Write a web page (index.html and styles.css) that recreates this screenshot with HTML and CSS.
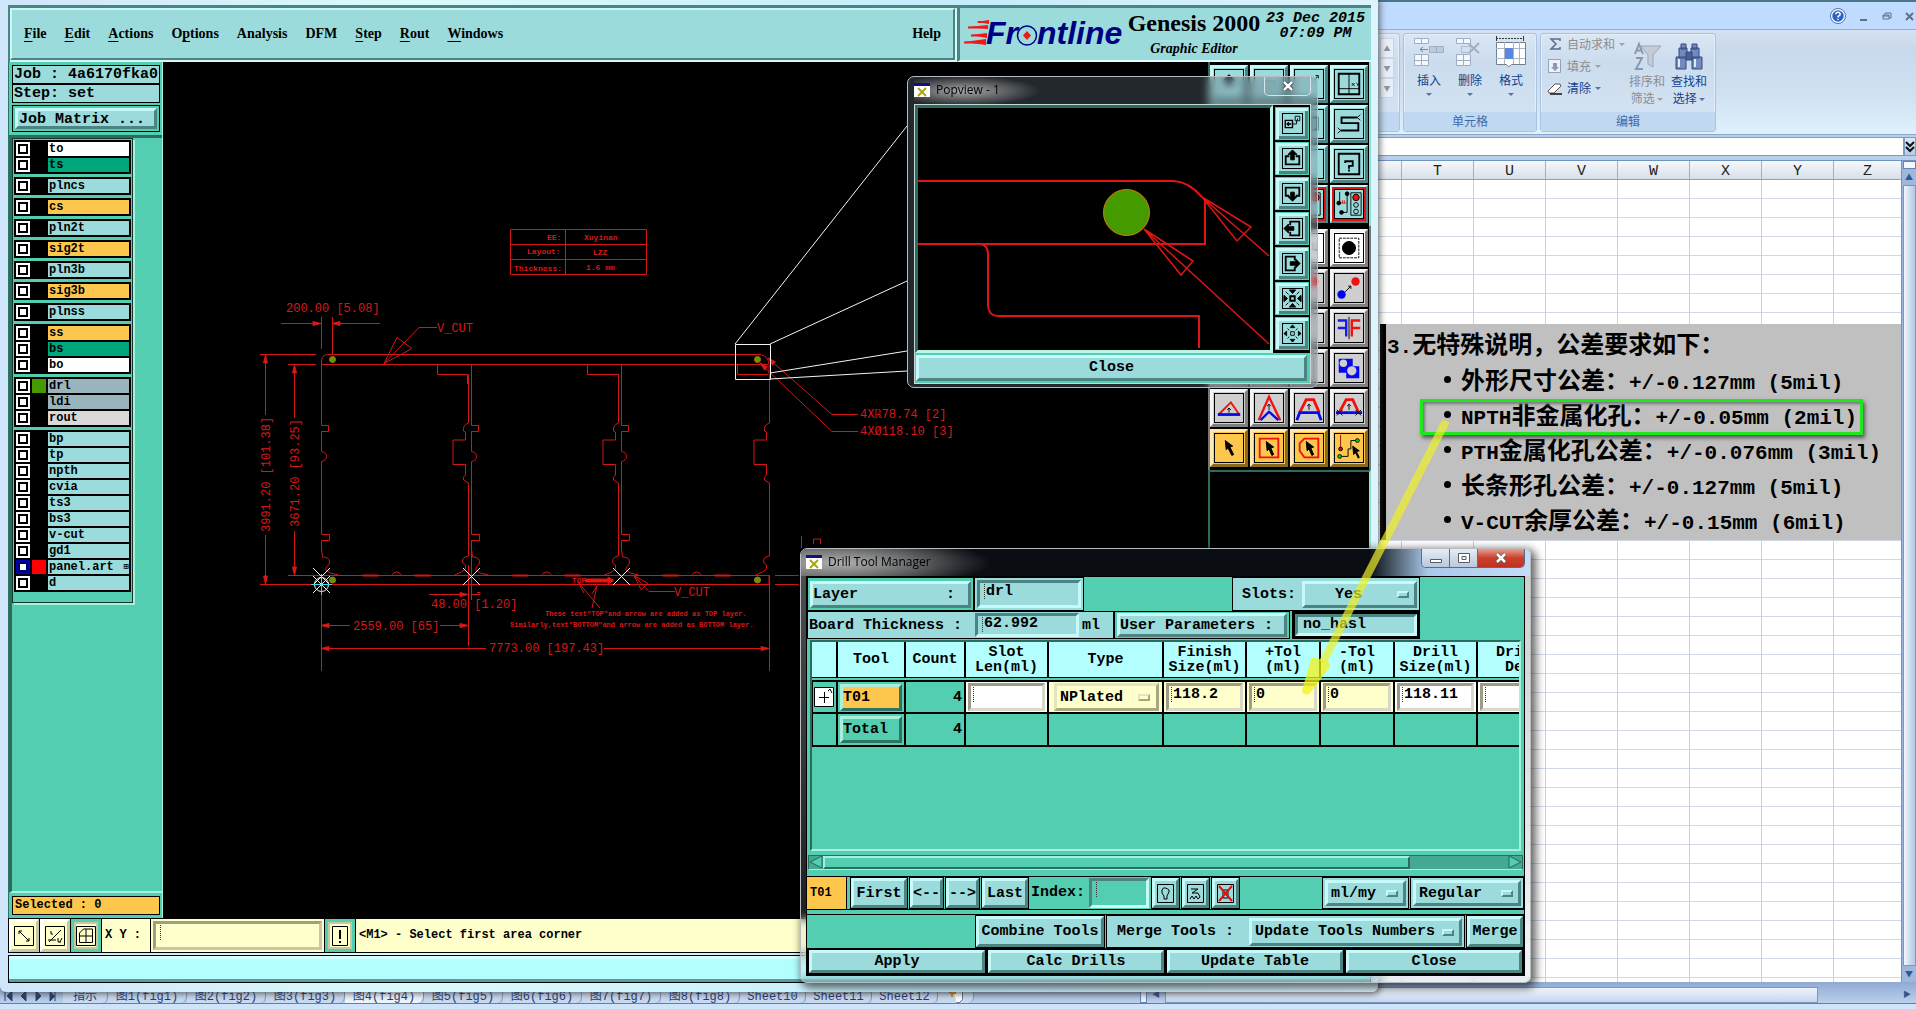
FILE: index.html
```html
<!DOCTYPE html>
<html lang="zh-CN">
<head>
<meta charset="utf-8">
<title>Genesis 2000</title>
<link rel="stylesheet" href="styles.css">
</head>
<body>

<!-- Spreadsheet behind the CAM windows -->
<section class="excel">
  <div class="xl-title">
    <svg width="16" height="16" viewBox="0 0 16 16"><circle cx="8" cy="8" r="6.500" fill="#2a62c8" stroke="#fff" stroke-width="1.500"/><circle cx="8" cy="8" r="7.500" fill="none" stroke="#4a74b8"/><path d="M5.800 6.300Q6 4.300 8 4.300T10.200 6.300Q10 7.500 8 8.400V9.500M8 10.700V12" fill="none" stroke="#fff" stroke-width="1.500"/></svg>
    <svg width="10" height="16" viewBox="0 0 10 16"><path d="M1 12h7" stroke="#5f6f84" stroke-width="2"/></svg>
    <svg width="10" height="16" viewBox="0 0 10 16"><path d="M3 6V5h6v5H7M1 7h6v4H1zM1 8h6" fill="none" stroke="#5f6f84"/></svg>
    <svg width="10" height="16" viewBox="0 0 10 16"><path d="M1 5l7 7M8 5l-7 7" stroke="#5f6f84" stroke-width="2"/></svg>
  </div>
  <div class="ribbon">
    <div class="rgroup styles-group">
      <div class="gallery"><span>▲</span><span>▼</span><span>▼</span></div>
      <div class="rlabel"></div>
    </div>
    <div class="rgroup cells-group">
      <div class="rbody">
        <button class="rbig"><svg width="32" height="32" viewBox="0 0 32 32"><g fill="#f4f7fb" stroke="#a0aec4"><path d="M1.500 2.500h14v5h-14zM8.500 2.500v5M1.500 18.500h14v11h-14zM8.500 18.500v11M1.500 24.500h14"/><path d="M16.500 10.500h14v6h-14zM23.500 10.500v6" fill="#bccbe0"/></g><path d="M7 13.500h8M10 11l-3 2.500 3 2.500" stroke="#7587a4" fill="none"/></svg>插入<i></i></button>
        <button class="rbig"><svg width="32" height="32" viewBox="0 0 32 32"><g fill="#f4f7fb" stroke="#a0aec4"><path d="M2.500 2.500h14v5h-14zM9.500 2.500v5M2.500 18.500h14v11h-14zM9.500 18.500v11M2.500 24.500h14"/></g><path d="M7.500 10.500h9v6h-9z" fill="none" stroke="#8b98ae" stroke-dasharray="1 1"/><path d="M15 8l10 9M25 7l-10 10" stroke="#a6aebb" stroke-width="2"/></svg>删除<i></i></button>
        <button class="rbig"><svg width="32" height="32" viewBox="0 0 32 32"><path d="M1 2.500h28M1.500 0v5M28.500 0v5" stroke="#333" stroke-dasharray="2 1"/><path d="M1.500 6.500h29v22h-14q-3 4-5 0h-10z" fill="#fff" stroke="#708090"/><path d="M9.500 6v22M18.500 6v22M24.500 6v22M1 12.500h29M1 22.500h29" stroke="#a8b6c8"/><path d="M10 12h8v11h-8z" fill="#5b88dd"/></svg>格式<i></i></button>
      </div>
      <div class="rlabel">单元格</div>
    </div>
    <div class="rgroup edit-group">
      <div class="rbody">
        <div class="rstack">
          <button class="rsmall off"><svg width="16" height="16" viewBox="0 0 16 16"><path d="M13 5V3H4l5 5-5 5h9v-2" fill="none" stroke="#5a6b8c" stroke-width="1.500"/></svg>自动求和<i></i></button>
          <button class="rsmall off"><svg width="16" height="16" viewBox="0 0 16 16"><path d="M1.500 1.500h12v13h-12z" fill="#eef2f8" stroke="#93a2bb"/><path d="M6 5h4v4h2l-4 4-4-4h2z" fill="#8b9ab2"/></svg>填充<i></i></button>
          <button class="rsmall"><svg width="16" height="16" viewBox="0 0 16 16"><path d="M1 11L8 4h5l1 2-7 7H2z" fill="#fff" stroke="#555"/><path d="M3 14h12" stroke="#111" stroke-width="1.500"/></svg>清除<i></i></button>
        </div>
        <button class="rbig two off"><svg width="32" height="32" viewBox="0 0 32 32"><path d="M4 14L8 4l4 10M5.500 10.500h5M5 18h6l-6 11h7" fill="none" stroke="#8a98b0" stroke-width="2"/><path d="M10 6h20L22 15v12l-5-3V15z" fill="#c5ccd8" stroke="#9ba6b8"/></svg>排序和<br>筛选 <i></i></button>
        <button class="rbig two"><svg width="32" height="32" viewBox="0 0 32 32"><g fill="#7489bd" stroke="#334a80"><path d="M8 4h5v5H8zM19 4h5v5h-5zM6 8h8v10H6zM18 8h8v10h-8zM3 17h10v12H3zM19 17h10v12H19z"/><path d="M13 12h6v8h-6z" fill="#4a5f98"/></g><path d="M6 19v8M22 19v8" stroke="#dfe8fa" stroke-width="2"/></svg>查找和<br>选择 <i></i></button>
      </div>
      <div class="rlabel">编辑</div>
    </div>
  </div>
  <div class="formula"><input class="fx" aria-label="编辑栏"><button class="expand" aria-label="展开"><svg width="11" height="14" viewBox="0 0 11 14"><path d="M1 2l4 4 4-4M1 7l4 4 4-4" fill="none" stroke="#111" stroke-width="2"/></svg></button></div>
  <div class="sheet">
    <div class="grid">
      <div class="cols"><span></span><span>T</span><span>U</span><span>V</span><span>W</span><span>X</span><span>Y</span><span class="last">Z</span></div>
      <div class="cells">
        <div class="note">
          <p class="head"><b>3.</b>无特殊说明，公差要求如下：</p>
          <ul>
            <li>外形尺寸公差：<b>+/-0.127mm (5mil)</b></li>
            <li><b>NPTH</b>非金属化孔：<b>+/-0.05mm (2mil)</b></li>
            <li><b>PTH</b>金属化孔公差：<b>+/-0.076mm (3mil)</b></li>
            <li>长条形孔公差：<b>+/-0.127mm (5mil)</b></li>
            <li><b>V-CUT</b>余厚公差：<b>+/-0.15mm (6mil)</b></li>
          </ul>
          <div class="mark"></div>
        </div>
      </div>
    </div>
    <div class="vscroll"><div class="split"></div><div class="arr">▲</div><div class="vthumb"></div><div class="arr">▼</div></div>
  </div>
  <div class="tabs">
    <svg class="nav" width="58" height="14" viewBox="0 0 58 14"><path d="M7 2v10M14 2v10l-5-5zM28 2v10l-5-5zM38 2v10l5-5zM52 2v10l5-5M57 2v10" fill="#28406e" stroke="#28406e" transform="translate(-2 0)"/></svg>
    <a href="#">指示</a><a href="#" class="w">图1(fig1)</a><a href="#" class="w">图2(fig2)</a><a href="#" class="w">图3(fig3)</a><a href="#" class="w on">图4(fig4)</a><a href="#" class="w">图5(fig5)</a><a href="#" class="w">图6(fig6)</a><a href="#" class="w">图7(fig7)</a><a href="#" class="w">图8(fig8)</a><a href="#" class="s">Sheet10</a><a href="#" class="s">Sheet11</a><a href="#" class="s">Sheet12</a><a href="#" class="new" aria-label="插入工作表"><svg width="16" height="14" viewBox="0 0 16 14"><path d="M5.500 2.500h9v8l-3 3h-3" fill="#fff" stroke="#5a70a0"/><path d="M4 1v7M1 4h7" stroke="#e09020" stroke-width="2"/></svg></a>
    <div class="hscroll"><div class="grip"></div><div class="arr">◀</div><div class="hthumb"></div><div class="rest"></div><div class="arr">▶</div></div>
  </div>
  <div class="xl-status"></div>
</section>

<!-- Genesis graphic editor -->
<section class="genesis">
  <header class="top">
    <nav class="menubar">
      <a href="#"><u>F</u>ile</a><a href="#"><u>E</u>dit</a><a href="#"><u>A</u>ctions</a><a href="#">O<u>p</u>tions</a><a href="#">Analysis</a><a href="#">DFM</a><a href="#"><u>S</u>tep</a><a href="#"><u>R</u>out</a><a href="#"><u>W</u>indows</a><a href="#" class="help">Help</a>
    </nav>
    <div class="brand">
      <svg width="164" height="40" viewBox="0 0 164 40"><g fill="#f01818"><path d="M12 8l13-2v4zM4 13l20-2v4zM7 21l16-2v5zM0 28l22-3v6z"/></g><path d="M14 8h10M4 13.500h20M7 21.500h16M0 28.500h22" stroke="#f01818" stroke-width="2"/><g font-family="Liberation Sans, sans-serif" font-weight="bold" font-style="italic" font-size="32" fill="#000084"><text x="22" y="30">Fr</text><text x="73" y="30">ntline</text></g><circle cx="63" cy="21.500" r="9.500" fill="none" stroke="#000084" stroke-width="1.500"/><path d="M63 17l4 4.500-4 4.500-4-4.500z" fill="#f01818"/></svg>
      <div class="product"><strong>Genesis 2000</strong><em>Graphic Editor</em></div>
      <div class="clock">23 Dec 2015<br>07:09 PM</div>
    </div>
  </header>

  <div class="work">
    <aside class="side">
      <div class="job">Job : 4a6170fka0</div>
      <div class="job">Step: set</div>
      <div class="jm"><button class="bev">Job Matrix ...</button></div>
      <div class="layers">
        <div class="layerbox">
          <div class="lg"><label><input type="checkbox"><i></i><span class="white">to</span></label><label><input type="checkbox"><i></i><span class="dark">ts</span></label></div>
          <div class="lg"><label><input type="checkbox"><i></i><span>plncs</span></label></div>
          <div class="lg"><label><input type="checkbox"><i></i><span class="orange">cs</span></label></div>
          <div class="lg"><label><input type="checkbox"><i></i><span>pln2t</span></label></div>
          <div class="lg"><label><input type="checkbox"><i></i><span class="orange">sig2t</span></label></div>
          <div class="lg"><label><input type="checkbox"><i></i><span>pln3b</span></label></div>
          <div class="lg"><label><input type="checkbox"><i></i><span class="orange">sig3b</span></label></div>
          <div class="lg"><label><input type="checkbox"><i></i><span>plnss</span></label></div>
          <div class="lg"><label><input type="checkbox"><i></i><span class="orange">ss</span></label><label><input type="checkbox"><i></i><span class="dark">bs</span></label><label><input type="checkbox"><i></i><span class="white">bo</span></label></div>
          <div class="lg"><label><input type="checkbox"><i class="green"></i><span class="slate">drl</span></label><label><input type="checkbox"><i></i><span class="slate">ldi</span></label><label><input type="checkbox"><i></i><span class="grey">rout</span></label></div>
          <div class="lg"><label><input type="checkbox"><i></i><span>bp</span></label><label><input type="checkbox"><i></i><span>tp</span></label><label><input type="checkbox"><i></i><span>npth</span></label><label><input type="checkbox"><i></i><span>cvia</span></label><label><input type="checkbox"><i></i><span>ts3</span></label><label><input type="checkbox"><i></i><span>bs3</span></label><label><input type="checkbox"><i></i><span>v-cut</span></label><label><input type="checkbox"><i></i><span>gd1</span></label><label><input type="checkbox" class="active"><i class="red"></i><span>panel.art<small>⊞</small></span></label><label><input type="checkbox"><i></i><span>d</span></label></div>
        </div>
      </div>
      <div class="selected">Selected : 0</div>
    </aside>

    <div class="canvas">
      <svg width="1045" height="856" viewBox="163 62 1045 856">
        <defs>
          <path id="pl" d="M0 364.500V425.500H7V431.500H0V451.500q5 1 5 5t-5 5V534.500H8V540.500H0V549L1 557q7 0 7 5 0 3-3 5l-1 3 5 3 8 2"/>
          <path id="pr" d="M0 374.500V423q-6 2-5 8l2 1v8H-15.500V464.500H-3V475q-3 2-2 5l5 3V556q-6 1-6 5 0 3 3 4v4l-4 3-7 3"/>
          <path id="pb" d="M41 575.500h16M93 575.500h16" stroke-width="2"/>
          <path id="bump" d="M70 575q5-6 10 0"/>
          <path id="ar" d="M0 0L8-2V2Z" fill="#e01818"/>
        </defs>
        <g fill="none" stroke="#d41616">
          <path d="M510.500 229.500h136v45h-136zM565.500 229.500v45M510.500 244.500h136M510.500 259.500h136"/>
          <path d="M321.500 364V360q1-5 6-5.500H760q8 1 9 10V374M321 364.500H768M288 575.500H769M260 584.500H769V575"/>
          <path d="M437.500 364.500v10h30V384M587.500 364.500v10h31V384M737.500 364.500v10h31"/>
          <use href="#pl" x="321.500"/><use href="#pl" x="471.500"/><use href="#pl" x="621.500"/>
          <use href="#pr" x="468.500"/><use href="#pr" x="618.500"/><use href="#pr" x="769.500"/>
          <use href="#pb" x="321.500"/><use href="#pb" x="471.500"/><use href="#pb" x="621.500"/>
          <use href="#bump" x="321.500"/><use href="#bump" x="471.500"/><use href="#bump" x="621.500"/>
          <path d="M281 323.500h40M332 323.500h48M321.500 317v32M332.500 317v38M260 354.500h56M288 364.500h28"/>
          <path d="M265.500 355v60M265.500 535v49M294.500 365v53M294.500 531v44"/>
          <path d="M321.500 584V671M468.500 565V646M471.500 540V600M769.500 575V671M321 625.500h29M440 625.500h28M321 648.500h165M604 648.500h165M429 594.500h38M472 594.500h8v-2h-3"/>
          <path d="M437 327.500H419L384 363.500M384 363.500L397 337.500 412 348.500Z"/>
          <path d="M675 591.500H649L634 575.500M634 575.500L641 589.500 648 583.500ZM600 608L578 582l6 11M592 608l5-22-5 8"/>
          <path d="M768 358L832 414.500H858M762 365L832 431.500H858M775 575.500h24M775 584.500h24M801.500 536v12M813.500 544v-5h7v5"/>
          <path d="M585 580.500h25" stroke="#f01010" stroke-width="4"/><path d="M608 577l6 3.500-6 3.500z" fill="#f01010"/>
          <use href="#ar" transform="translate(332 323.500)"/><use href="#ar" transform="translate(321 323.500) rotate(180)"/>
          <use href="#ar" transform="translate(321 625.500)"/><use href="#ar" transform="translate(468 625.500) rotate(180)"/>
          <use href="#ar" transform="translate(321 648.500)"/><use href="#ar" transform="translate(769 648.500) rotate(180)"/>
          <use href="#ar" transform="translate(468 594.500) rotate(180)"/>
          <use href="#ar" transform="translate(265.500 355) rotate(90)"/><use href="#ar" transform="translate(265.500 584) rotate(-90)"/>
          <use href="#ar" transform="translate(294.500 365) rotate(90)"/><use href="#ar" transform="translate(294.500 575) rotate(-90)"/>
          <use href="#ar" transform="translate(768 358) rotate(42)"/><use href="#ar" transform="translate(760 363) rotate(42)"/>
        </g>
        <g fill="#5a9a08" stroke="#b07010"><circle cx="332.500" cy="359.500" r="3"/><circle cx="757.500" cy="359.500" r="3"/><circle cx="332.500" cy="580" r="3"/><circle cx="757.500" cy="580" r="3"/></g>
        <g class="dim">
          <text x="286" y="312">200.00 [5.08]</text><text x="437" y="332">V_CUT</text><text x="674" y="596">V_CUT</text>
          <text x="431" y="608">48.00 [1.20]</text><text x="353" y="630">2559.00 [65]</text><text x="489" y="652">7773.00 [197.43]</text>
          <text x="860" y="418">4Xℝ78.74 [2]</text><text x="860" y="435">4XØ118.10 [3]</text>
          <text transform="translate(270 532) rotate(-90)">3991.20 [101.38]</text><text transform="translate(299 527) rotate(-90)">3671.20 [93.25]</text>
        </g>
        <g class="dim tiny">
          <text x="547" y="240">EE:</text><text x="527" y="254">Layout:</text><text x="514" y="271">Thickness:</text>
          <text x="584" y="240">Xuyinan</text><text x="593" y="255">LZZ</text><text x="586" y="270">1.6 mm</text><text x="572" y="583">TOP</text>
        </g>
        <g class="dim micro"><text x="545" y="616">These text"TOP"and arrow are added as TOP layer.</text><text x="510" y="627">Similarly,text"BOTTOM"and arrow are added as BOTTOM layer.</text></g>
        <g fill="none" stroke="#f4f4f4">
          <path d="M735.500 344.500h35v35h-35zM735 344L907 126M770 344L907 281M770 373L907 351M770 379L907 371"/>
          <path d="M313 568l17 17M330 568l-17 17M463 568l17 17M480 568l-17 17M613 568l17 17M630 568l-17 17M313 576l17 17M330 576l-17 17"/>
          <circle cx="321.500" cy="584.500" r="7"/>
          <path d="M311 584.500h21M321.500 574v21" stroke="#40e0e8"/>
        </g>
      </svg>
    </div>

    <div class="tools">
      <div class="tgroup cyan">
        <button aria-label="Up"><svg viewBox="0 0 30 30"><path d="M15 5l6 6h-3v5h-6v-5H9z" fill="#000"/></svg></button>
        <button aria-label="Home"><svg viewBox="0 0 30 30"><path d="M9 12h12v10H9z"/></svg></button>
        <button aria-label="Zoom"><svg viewBox="0 0 30 30"><path d="M16 9h2M21 11l3-4M22 6h3v3"/></svg></button>
        <button aria-label="Coordinates"><svg viewBox="0 0 30 30"><path d="M4 4h22v22H4z" stroke-width="2"/><path d="M15 4v22M4 20h22M18 14l3 3M21 14l-3 3M23 14l1.500 1.500L26 14M24.500 15.500V17"/></svg></button>
        <button aria-label="View 1"><svg viewBox="0 0 30 30"><path d="M8 8h12v12H8z"/></svg></button>
        <button aria-label="View 2"><svg viewBox="0 0 30 30"><path d="M8 8h12v12H8z"/></svg></button>
        <button aria-label="View 3"><svg viewBox="0 0 30 30"><path d="M12 8h12v13H12z" stroke-width="2"/></svg></button>
        <button aria-label="Profile"><svg viewBox="0 0 30 30"><path d="M24 8H7v6h18v8H6" stroke-width="2"/><path d="M24 8l3-3M24 8l3 3M6 22l-3-3M6 22l-3 3"/></svg></button>
        <button aria-label="Tool 1"><svg viewBox="0 0 30 30"></svg></button>
        <button aria-label="Tool 2"><svg viewBox="0 0 30 30"></svg></button>
        <button aria-label="Tool 3"><svg viewBox="0 0 30 30"></svg></button>
        <button aria-label="Query"><svg viewBox="0 0 30 30"><path d="M4 4h22v22H4zM11 14v-2h8v5h-4v3M15 21v2" stroke-width="2"/></svg></button>
        <button aria-label="Net 1"><svg viewBox="0 0 30 30"></svg></button>
        <button aria-label="Net 2"><svg viewBox="0 0 30 30"></svg></button>
        <button aria-label="Net 3" class="hot"><svg viewBox="0 0 30 30"><path d="M17 3h10v24H17z"/><circle cx="22" cy="8" r="4" fill="#f01010"/></svg></button>
        <button aria-label="Net 4" class="hot"><svg viewBox="0 0 30 30"><path d="M5 2v12M13 5v19H8M17 3h11v24H17z"/><path d="M6 14h6M8 11v3M10 11v3" stroke="#f01010"/><g fill="#000"><circle cx="13" cy="4" r="2"/><circle cx="4" cy="14" r="2"/><circle cx="7" cy="24" r="2"/></g><circle cx="22.500" cy="8" r="3.500" fill="#f01010"/><circle cx="22.500" cy="16" r="2.500"/><circle cx="22.500" cy="23" r="2.500"/></svg></button>
      </div>
      <div class="tgroup gray">
        <button class="pale" aria-label="Add 1"><svg viewBox="0 0 30 30"></svg></button>
        <button class="pale" aria-label="Add 2"><svg viewBox="0 0 30 30"></svg></button>
        <button class="pale" aria-label="Add 3"><svg viewBox="0 0 30 30"><path d="M19 9v8h5V9"/></svg></button>
        <button class="pale" aria-label="Select pad"><svg viewBox="0 0 30 30"><path d="M4.500 4.500h21v21h-21z" stroke-dasharray="3 1"/><circle cx="15" cy="15" r="7" fill="#000"/></svg></button>
        <button aria-label="Edit 1"><svg viewBox="0 0 30 30"></svg></button>
        <button aria-label="Edit 2"><svg viewBox="0 0 30 30"></svg></button>
        <button aria-label="Edit 3"><svg viewBox="0 0 30 30"><circle cx="20" cy="8" r="5" fill="#f01010" stroke="none"/></svg></button>
        <button aria-label="Move"><svg viewBox="0 0 30 30"><circle cx="22" cy="8" r="4.500" fill="#f01010" stroke="none"/><circle cx="7" cy="22" r="4.500" fill="#0000f0" stroke="none"/><path d="M11 19l6-6M14 13h3v3"/></svg></button>
        <button aria-label="Edit 4"><svg viewBox="0 0 30 30"></svg></button>
        <button aria-label="Edit 5"><svg viewBox="0 0 30 30"></svg></button>
        <button aria-label="Edit 6"><svg viewBox="0 0 30 30"></svg></button>
        <button aria-label="Mirror"><svg viewBox="0 0 30 30"><path d="M15 3v24"/><path d="M3 7h9v17M3 15h9" stroke="#1818f0" stroke-width="2.500"/><path d="M27 7h-9v17M27 15h-9" stroke="#f01010" stroke-width="2.500"/></svg></button>
        <button aria-label="Edit 7"><svg viewBox="0 0 30 30"></svg></button>
        <button aria-label="Edit 8"><svg viewBox="0 0 30 30"></svg></button>
        <button aria-label="Edit 9"><svg viewBox="0 0 30 30"><path d="M20 4v22"/></svg></button>
        <button aria-label="Surface"><svg viewBox="0 0 30 30"><path d="M4 5h15v8h7v13H12v-6H4z" fill="#0808f0" stroke="none"/><circle cx="9" cy="10" r="4" fill="#cfcfcf" stroke="none"/><circle cx="18" cy="18" r="5" fill="#cfcfcf" stroke="none"/></svg></button>
        <button aria-label="Triangle"><svg viewBox="0 0 30 30"><path d="M4 22L17 9l9 13" stroke="#f01010" stroke-width="2"/><path d="M3 22h24" stroke="#0808f0" stroke-width="3"/><path d="M15 20v-5M13 17l2-2 2 2"/></svg></button>
        <button aria-label="Peak"><svg viewBox="0 0 30 30"><path d="M4 28L15 3l12 25" stroke="#f01010" stroke-width="2.500"/><path d="M6 28l9-9 10 9" stroke="#0808f0" stroke-width="2.500"/><path d="M15 17v-6M13 13l2-2 2 2"/></svg></button>
        <button aria-label="Trapezoid"><svg viewBox="0 0 30 30"><path d="M5 20L12 6h8l6 14" stroke="#f01010" stroke-width="3"/><path d="M2 28l3-8h20l3 8" stroke="#0808f0" stroke-width="3"/><path d="M15 17v-6M13 13l2-2 2 2"/></svg></button>
        <button aria-label="Trapezoid line"><svg viewBox="0 0 30 30"><path d="M5 19L12 6h7l6 13" stroke="#f01010" stroke-width="3"/><path d="M1 20h28" stroke="#0808f0" stroke-width="3"/><path d="M15 17v-6M13 13l2-2 2 2M2 17l6 6M8 17l-6 6M22 17l6 6M28 17l-6 6"/></svg></button>
        <button class="gold" aria-label="Select"><svg viewBox="0 0 30 30"><path d="M11 7l1 10 2-2 4 8 2-1-4-8 3-1z" fill="#000"/></svg></button>
        <button class="gold" aria-label="Select frame"><svg viewBox="0 0 30 30"><path d="M5 5h20v20H5z" stroke="#f01010" stroke-width="2"/><path d="M12 8l1 10 2-2 3 7 2-1-3-7 3-1z" fill="#000"/></svg></button>
        <button class="gold" aria-label="Select polygon"><svg viewBox="0 0 30 30"><path d="M10 5h15v20H10l-5-7v-8z" stroke="#f01010" stroke-width="2"/><path d="M12 8l1 10 2-2 3 7 2-1-3-7 3-1z" fill="#000"/></svg></button>
        <button class="gold" aria-label="Select net"><svg viewBox="0 0 30 30"><path d="M6 1v14" stroke="#901010"/><path d="M6 24h8v-8h3V7h8"/><circle cx="6" cy="16" r="2" fill="#e01010"/><circle cx="5" cy="24" r="2" fill="#20d020"/><circle cx="24" cy="7" r="2" fill="#20d020"/><path d="M19 13l1 9 2-2 3 6 1-1-3-6 3-1z" fill="#000"/></svg></button>
      </div>
      <div class="tempty"></div>
    </div>
  </div>

  <div class="cmd">
    <button class="ic" aria-label="Snap"><svg width="20" height="20" viewBox="0 0 20 20"><path d="M.500.500h19v19H.500zM5 5l10 10M5 8V5h3M15 12v3h-3"/></svg></button>
    <button class="ic" aria-label="Grid off"><svg width="20" height="20" viewBox="0 0 20 20"><path d="M.500.500h19v19H.500zM4 16L16 4M3 14h8M6 5v3h2M13 12v4h3M17 12l-2 4"/></svg></button>
    <button class="ic g" aria-label="Grid"><svg width="20" height="20" viewBox="0 0 20 20"><path d="M.500.500h19v19H.500zM3.500 16.500V7l4-4h9v13.500zM10 3v13M3.500 10h13"/></svg></button>
    <label for="xy">X Y :</label>
    <div class="xyw"><input id="xy" class="field beam"></div>
    <button class="ic g" aria-label="Alert"><svg width="20" height="20" viewBox="0 0 20 20"><path d="M2.500.500h15v19h-15z"/><path d="M10 4v9M10 15v2" stroke-width="2"/></svg></button>
    <output>&lt;M1&gt; - Select first area corner</output>
  </div>
  <div class="statusline"></div>
</section>

<!-- Popview magnifier -->
<section class="win popview">
  <div class="wtitle"><svg width="16" height="14" viewBox="0 0 16 14"><path d="M0 0h16v14H0z" fill="#fff"/><path d="M0 0h16v3H0z" fill="#101080"/><path d="M4 5l8 8M12 5l-8 8" stroke="#a8a810" stroke-width="2"/></svg><span>Popview - 1</span>
    <button class="pclose" aria-label="Close window"><svg width="12" height="10" viewBox="0 0 12 10"><path d="M2 1l8 8M10 1L2 9" stroke="#333" stroke-width="4"/><path d="M2 1l8 8M10 1L2 9" stroke="#fff" stroke-width="2.500"/></svg></button></div>
  <div class="pbody">
    <div class="prow">
      <div class="pcanvas"><svg width="353" height="242" viewBox="918 108 353 242"><g fill="none" stroke="#e01414" stroke-width="2"><path d="M918 181H1174q15 1 28 16M1205 200V244H918M980 244q8 1 8 10V306q1 10 10 10H1199V348"/><path d="M1202 197L1251 227 1237 241ZM1202 197L1269 256M1144 229L1193 261 1181 275ZM1144 229L1269 344" stroke-width="1.500"/></g><circle cx="1126.500" cy="212.500" r="23" fill="#459a00" stroke="#d08010"/></svg></div>
      <div class="pbtns">
        <button aria-label="Dock"><svg viewBox="0 0 21 21"><path d="M2.500 7h8v8h-8zM5 11h4M6.500 9l-2 2 2 2" stroke-width="1.500"/><path d="M10 11h5V7M13.500 2.500h5v5h-5zM16 5v2"/></svg></button>
        <button aria-label="Pan up"><svg viewBox="0 0 21 21"><path d="M7 8H3v9h15V8h-4" stroke-width="2"/><path d="M10.500 1l5 5h-3v6h-4V6h-3z" fill="#000"/></svg></button>
        <button aria-label="Pan down"><svg viewBox="0 0 21 21"><path d="M7 13H3V4h15v9h-4" stroke-width="2"/><path d="M10.500 19l5-5h-3V9h-4v5h-3z" fill="#000"/></svg></button>
        <button aria-label="Pan left"><svg viewBox="0 0 21 21"><path d="M8 7V3h10v15H8v-4" stroke-width="2"/><path d="M1 10.500l5-5v3h6v4H6v3z" fill="#000"/></svg></button>
        <button aria-label="Pan right"><svg viewBox="0 0 21 21"><path d="M13 7V3H3v15h10v-4" stroke-width="2"/><path d="M19 10.500l-5-5v3H8v4h6v3z" fill="#000"/></svg></button>
        <button aria-label="Zoom in"><svg viewBox="0 0 21 21"><path d="M8 8h5v5H8z" stroke-width="2"/><path d="M10.500 5L7 1h7zM10.500 16L7 20h7zM5 10.500L1 7v7zM16 10.500L20 7v7z" fill="#000"/><path d="M3 3l3 3M18 3l-3 3M3 18l3-3M18 18l-3-3"/></svg></button>
        <button aria-label="Zoom out"><svg viewBox="0 0 21 21"><path d="M8.500 8.500h4v4h-4z"/><path d="M10.500 1L13 4H8zM10.500 20L13 17H8zM1 10.500L4 8v5zM20 10.500L17 8v5z" fill="#000"/><path d="M5 5l2 2M16 5l-2 2M5 16l2-2M16 16l-2-2"/></svg></button>
      </div>
    </div>
    <button class="bev pok">Close</button>
  </div>
</section>

<!-- Drill Tool Manager dialog -->
<section class="win drill">
  <div class="wtitle"><svg width="16" height="14" viewBox="0 0 16 14"><path d="M0 0h16v14H0z" fill="#fff"/><path d="M0 0h16v3H0z" fill="#101080"/><path d="M4 5l8 8M12 5l-8 8" stroke="#a8a810" stroke-width="2"/></svg><span>Drill Tool Manager</span>
    <div class="wctl"><button aria-label="Minimize"><svg width="14" height="12" viewBox="0 0 14 12"><path d="M1.500 7.500h11v3h-11z" fill="#fff" stroke="#555b66"/></svg></button><button aria-label="Maximize"><svg width="14" height="12" viewBox="0 0 14 12"><path d="M1.500 1.500h11v9h-11zM5 4.500h4v3H5z" fill="#fff" stroke="#555b66"/></svg></button><button class="x" aria-label="Close window"><svg width="14" height="12" viewBox="0 0 14 12"><path d="M3 2l8 8M11 2l-8 8" stroke="#555" stroke-width="4"/><path d="M3 2l8 8M11 2l-8 8" stroke="#fff" stroke-width="2.500"/></svg></button></div></div>
  <div class="dbody">
    <div class="drow r1">
      <div class="cell g c-layer"><button class="bev lb"><span>Layer</span><span>:</span></button></div>
      <div class="cell c-drl"><input class="field beam" value="drl" aria-label="Layer"></div>
      <div class="fill"></div>
      <div class="cell c-slots"><label for="slots">Slots:</label><span class="opt"><select id="slots" class="bev mid"><option>Yes</option></select></span></div>
      <div class="rightpad"></div>
    </div>
    <div class="drow r2">
      <div class="cell c-bt"><label for="bt">Board Thickness :</label><input id="bt" class="field beam" value="62.992"><span>ml</span></div>
      <div class="cell g c-up"><button class="bev">User Parameters :</button></div>
      <div class="fill"></div>
      <div class="c-hasl"><input class="field" value="no_hasl" aria-label="User parameters"></div>
      <div class="rightpad"></div>
    </div>
    <div class="pane">
      <table>
        <colgroup><col class="k0"><col class="k1"><col class="k2"><col class="k3"><col class="k4"><col class="k3"><col class="k5"><col class="k5"><col class="k3"><col class="k3"></colgroup>
        <thead><tr><th></th><th>Tool</th><th>Count</th><th>Slot<br>Len(ml)</th><th>Type</th><th>Finish<br>Size(ml)</th><th>+Tol<br>(ml)</th><th>-Tol<br>(ml)</th><th>Drill<br>Size(ml)</th><th>Drill<br>Des</th></tr></thead>
        <tbody>
          <tr><td><button class="plus" aria-label="Expand"><svg width="20" height="20" viewBox="0 0 20 20"><path d="M.500.500h19v19H.500z" fill="#fff"/><path d="M5 10.500h10M10.500 5v11M14 4l2-2 2 4"/></svg></button></td><td><button class="bev tool gold">T01</button></td><td class="num">4</td><td class="w"><input class="field beam" aria-label="Slot length"></td><td class="c"><span class="opt"><select class="bev cream" aria-label="Type"><option>NPlated</option></select></span></td><td class="c"><input class="field beam" value="118.2" aria-label="Finish size"></td><td class="c"><input class="field beam" value="0" aria-label="Plus tolerance"></td><td class="c"><input class="field beam" value="0" aria-label="Minus tolerance"></td><td class="w"><input class="field beam" value="118.11" aria-label="Drill size"></td><td class="w"><input class="field beam" aria-label="Drill designator"></td></tr>
          <tr><td></td><td><button class="bev tool green">Total</button></td><td class="num">4</td><td></td><td></td><td></td><td></td><td></td><td></td><td></td></tr>
        </tbody>
      </table>
    </div>
    <div class="dscroll"><svg width="14" height="12" viewBox="0 0 14 12"><path d="M13 0v12L1 6z" fill="#54ceb0" stroke="#206858"/></svg><div class="dtrack"><div class="dthumb"></div></div><svg width="14" height="12" viewBox="0 0 14 12"><path d="M1 0v12l12-6z" fill="#54ceb0" stroke="#206858"/></svg></div>
    <div class="drow ra">
      <div class="t01">T01</div>
      <button class="bev first">First</button><button class="bev step">&lt;--</button><button class="bev step">--&gt;</button><button class="bev last">Last</button>
      <label for="idx">Index:</label><input id="idx" class="field beam idx">
      <button class="bev ico" aria-label="Highlight"><svg width="17" height="19" viewBox="0 0 17 19"><path d="M.500.500h16v18H.500zM7 12Q4 9 5 6t3.500-2T12 6t-2 6v3H7z"/></svg></button><button class="bev ico" aria-label="Select tool"><svg width="17" height="19" viewBox="0 0 17 19"><path d="M.500.500h16v18H.500zM4 5h7l-6 4h6l2 4M3 15l2-3 2 3 2-3 2 3 2-2"/></svg></button><button class="bev ico" aria-label="Delete"><svg width="17" height="19" viewBox="0 0 17 19"><path d="M.500.500h16v18H.500zM6 14V6h5v8z"/><path d="M2 2l13 15M15 2L2 17" stroke="#e01010" stroke-width="2"/></svg></button>
      <div class="fill"></div>
      <div class="cell c-unit"><span class="opt"><select class="bev" aria-label="Units"><option>ml/my</option></select></span></div>
      <div class="cell c-reg"><span class="opt"><select class="bev" aria-label="Mode"><option>Regular</option></select></span></div>
    </div>
    <div class="drow rb">
      <div class="fill"></div>
      <button class="bev combine">Combine Tools</button>
      <div class="cell c-merge"><label for="mt">Merge Tools :</label><span class="opt"><select id="mt" class="bev"><option>Update Tools Numbers</option></select></span></div>
      <button class="bev merge">Merge</button>
    </div>
    <div class="drow rc"><button class="bev">Apply</button><button class="bev">Calc Drills</button><button class="bev">Update Table</button><button class="bev">Close</button></div>
  </div>
</section>

<svg class="callout" width="160" height="290" viewBox="0 0 160 290"><path d="M149 8L26 249" stroke="#eef028" stroke-width="8" stroke-opacity=".7"/><path d="M13 250q0-6 6-5l12 4q4 2 1 6l-18 24q-4 5-8 1l-1-3z" fill="#f2f218" fill-opacity=".75"/></svg>
</body>
</html>
```
FILE: styles.css
```css
:root {
  --green: #54ceb0;
  --cyan: #9bdbdb;
  --pale: #b3ffff;
  --gold: #fdc74e;
  --cream: #ffffcc;
  --hi: #c6fafa;
  --lo: #4c8484;
  --mono: "Liberation Mono", monospace;
  --cjk: "Noto Sans CJK SC", sans-serif;
}
*, *::before, *::after { box-sizing: border-box; }
body { margin: 0; position: relative; height: 100vh; overflow: hidden; background: #d8f0f8; color: #000; font-family: var(--mono); }
button, input, select { margin: 0; padding: 0; border: 0; border-radius: 0; font: inherit; color: inherit; background: none; appearance: none; min-width: 0; }
a { color: inherit; text-decoration: none; }
svg { display: block; flex: none; }
p, ul { margin: 0; padding: 0; list-style: none; }

/* raised push buttons, sunken fields */
.bev { background: var(--cyan); border: 3px solid; border-color: var(--hi) var(--lo) var(--lo) var(--hi); white-space: nowrap; }
.field { border: 3px solid; border-color: var(--lo) var(--hi) var(--hi) var(--lo); width: 100%; padding: 0 5px 5px 6px; }
.beam { background: repeating-linear-gradient(#333 0 1px, transparent 1px 2px) 4px 1px / 1px 15px no-repeat; }
.opt { position: relative; display: flex; }
.opt select { width: 100%; padding-left: 8px; }
.opt::after { content: ""; position: absolute; right: 10px; top: 50%; width: 12px; height: 7px; margin-top: -3px; border: 2px solid; border-color: var(--hi) var(--lo) var(--lo) var(--hi); }

/* spreadsheet */
.excel { position: absolute; inset: 0; display: flex; flex-direction: column; font-family: var(--cjk); background: #c4d9f1; }
.xl-title { height: 29px; border-top: 2px solid #4a7688; background: #bfdbff; display: flex; justify-content: flex-end; align-items: center; gap: 13px; padding-right: 1px; }
.ribbon { height: 106px; display: flex; justify-content: flex-end; gap: 3px; padding: 3px 200px 2px 0; border-top: 1px solid #8fb0d8; border-bottom: 1px solid #8aa8cc; background: linear-gradient(#d4e1f1 0, #c9d9ec 18%, #cfe0f1 60%, #def1fc); }
.rgroup { border: 1px solid #a9c3e0; border-radius: 3px; display: flex; flex-direction: column; background: linear-gradient(#dae6f3, #cbdcee 30%, #d6e5f4); box-shadow: inset 0 0 0 1px #e4eefa; }
.styles-group { width: 36px; }
.cells-group { width: 134px; }
.edit-group { width: 176px; }
.gallery { flex: 1; margin: 4px 5px 14px auto; width: 14px; display: flex; flex-direction: column; font-size: 7px; color: #8c95a4; }
.gallery span { flex: 1; border: 1px solid #cbd5e4; background: #e8eef6; display: grid; place-items: center; }
.rbody { flex: 1; display: flex; padding: 2px 6px; justify-content: space-between; }
.rlabel { height: 19px; background: #c1d8f1; color: #3e6aaa; font-size: 12px; line-height: 18px; text-align: center; }
.rbig { width: 38px; font-size: 12px; line-height: 18px; color: #15428b; display: flex; flex-direction: column; align-items: center; white-space: nowrap; }
.rbig svg { margin-bottom: 3px; }
.rbig i { margin-top: 4px; }
.ribbon i { display: inline-block; width: 6px; border: 3px solid transparent; border-top-color: #5475a8; border-bottom: 0; }
.rbig.two { display: block; line-height: 17px; width: 40px; }
.rbig.two svg { margin: 0 auto; }
.rbig.two i { margin: 0; vertical-align: middle; }
.rstack { display: flex; flex-direction: column; margin-top: -3px; }
.rsmall { display: flex; align-items: center; gap: 4px; height: 22px; width: 78px; font-size: 12px; line-height: 18px; color: #15428b; white-space: nowrap; }
.rbody .off { color: #8d8d8d; }
.rbody .off i { border-top-color: #a0a0a0; }
.formula { height: 26px; padding: 2px 0 4px; display: flex; background: #b9d0ec; border-bottom: 1px solid #6f93be; }
.fx { flex: 1; background: #fff; border: 1px solid #7e9cc4; }
.expand { width: 12px; background: linear-gradient(#dce9f8, #b4cdec); border: 1px solid #7e9cc4; display: grid; place-items: center; }
.sheet { flex: 1; display: flex; min-height: 0; }
.grid { flex: 1; display: flex; flex-direction: column; min-width: 0; }
.cols { height: 19px; display: flex; justify-content: flex-end; background: linear-gradient(#f6f9fc, #d6dfea); border-bottom: 1px solid #8f9fb5; font: 15px/22px var(--mono); color: #222; }
.cols span { width: 72px; height: 18px; border-right: 1px solid #9eb0c8; text-align: center; }
.cols .last { width: 67px; border: 0; }
.cells { position: relative; flex: 1; background: linear-gradient(90deg, #c9d1de 1px, transparent 1px) 33px 0 / 72px 19px, linear-gradient(transparent 18px, #d0d7e5 18px) 0 0 / 72px 19px, #fff; }
.vscroll { width: 15px; display: flex; flex-direction: column; align-items: center; background: #9cb8dc; border-left: 1px solid #6f93c4; }
.split { width: 13px; height: 8px; background: #f4f8fd; border: 1px solid #6284b8; }
.arr { font-size: 8px; line-height: 16px; color: #33568c; }
.vthumb { flex: 1; width: 13px; border: 1px solid #7d98c0; background: linear-gradient(90deg, #f3f7fc, #c8d8ee 60%, #b4c8e4); }
.note { position: absolute; right: 0; top: 144px; width: 521px; height: 216px; overflow: hidden; background: #c0c0c0; border-left: 6px solid #000; font-size: 24px; line-height: 36px; font-weight: bold; padding-top: 1px; white-space: nowrap; }
.note b { font: bold 21px/20px var(--mono); }
.note p { padding-left: 1px; }
.note li { padding-left: 75px; position: relative; line-height: 35px; }
.note li::before { content: ""; position: absolute; left: 58px; top: 15px; width: 7px; height: 7px; border-radius: 50%; background: #000; }
.mark { position: absolute; left: 34px; top: 75px; width: 443px; height: 36px; border: 3px solid #1fe61f; box-shadow: 2px 3px 4px #555, inset 2px 2px 3px #777; }
.tabs { height: 22px; display: flex; align-items: flex-end; background: linear-gradient(#8fabd4, #a9c0e2 60%, #bcd0ea); font: 12px/12px "Liberation Mono", "Noto Sans CJK SC", monospace; color: #1f3c78; border-bottom: 1px solid #5f7fb0; }
.tabs .nav { margin-right: 5px; }
.tabs a { width: 45px; height: 16px; padding-top: 4px; text-align: center; background: #c9daf0; border-right: 1px solid #7f9ac4; border-bottom-right-radius: 6px; white-space: nowrap; }
.tabs a.w { width: 79px; }
.tabs a.on { background: #eef4fc; }
.tabs a.s { width: 66px; }
.tabs a.new { width: 36px; padding-top: 2px; padding-left: 10px; }
.hscroll { flex: 1; max-width: 776px; height: 16px; margin-left: auto; display: flex; }
.grip { width: 7px; background: #eaf1fb; border: 1px solid #6284b8; }
.hscroll .arr { width: 18px; text-align: center; }
.hthumb { flex: 5; border: 1px solid #7d98c0; background: linear-gradient(#eef4fc, #c6d7ee); }
.rest { width: 80px; }
.xl-status { height: 5px; background: #cfe3fb; }

/* main CAM window */
.genesis { position: absolute; left: 0; top: 0; right: 538px; bottom: 17px; padding: 5px 7px 9px 8px; display: flex; flex-direction: column; background: linear-gradient(90deg, #cfe6fa, #d9fbfb 30%, #c4ecfb 70%, #dcf4fd); border-radius: 0 0 6px 6px; box-shadow: 1px 1px 6px 1px #333a; }
.top { display: flex; height: 57px; background: #d8f8f8; border-top: 3px solid var(--lo); border-left: 2px solid var(--lo); }
.menubar { flex: 1; display: flex; align-items: center; gap: 18px; padding: 0 12px 2px; background: var(--cyan); border: 2px solid; border-color: var(--hi) var(--lo) var(--lo) var(--hi); margin-bottom: 2px; font: bold 14px/17px "Liberation Serif", serif; }
.menubar u { text-underline-offset: 3px; }
.help { margin-left: auto; }
.brand { width: 414px; margin-left: 2px; padding-left: 4px; display: flex; align-items: flex-start; background: var(--cyan); border-left: 3px solid var(--lo); border-bottom: 2px solid #e0ffff; }
.brand svg { margin-top: 6px; }
.product { width: 132px; display: flex; flex-direction: column; align-items: center; font-family: "Liberation Serif", serif; }
.product strong { font-size: 24px; line-height: 30px; white-space: nowrap; }
.product em { font-size: 14px; line-height: 21px; font-weight: bold; white-space: nowrap; }
.clock { width: 107px; padding: 3px 0 0 4px; font: italic bold 15px/15px var(--mono); text-align: center; white-space: nowrap; }
.work { flex: 1; display: flex; min-height: 0; background: #000; }
.side { width: 155px; display: flex; flex-direction: column; padding: 3px 2px 3px 3px; background: var(--green); border-left: 1px solid #2c7464; border-right: 1px solid #a8efdc; font-weight: bold; }
.job { height: 19px; background: var(--cyan); border: 1px solid #000; padding-left: 1px; font: bold 15px/18px var(--mono); white-space: nowrap; overflow: hidden; }
.jm { height: 27px; margin: 2px 0 3px; border: 1px solid #000; padding: 2px; display: flex; }
.jm .bev { flex: 1; text-align: left; font-size: 15px; line-height: 17px; padding-left: 1px; }
.layers { flex: 1; margin: 0 -2px 0 -3px; border-top: 3px solid #2c6c5c; border-left: 3px solid #2c6c5c; border-bottom: 2px solid #a8efdc; }
.layerbox { width: 121px; padding: 1px 1px 10px; border: 1px solid #10382e; display: flex; flex-direction: column; gap: 3px; box-shadow: 2px 2px 0 #a8efdc; }
.lg { background: #000; padding: 2px; display: flex; flex-direction: column; gap: 2px; }
.lg label { display: flex; gap: 2px; height: 14px; font-size: 12px; line-height: 14px; }
.lg input { width: 14px; height: 14px; background: #fff; border: 2px solid #fff; box-shadow: inset 0 0 0 2px #000; }
.lg input.active { border-color: #0000b8; box-shadow: inset 0 0 0 2px #000060; }
.lg i { width: 14px; }
.lg span { flex: 1; background: var(--cyan); padding-left: 1px; display: flex; justify-content: space-between; }
.lg small { font-size: 9px; }
.lg .white { background: #fff; } .lg .dark { background: #00a67c; } .lg .orange { background: var(--gold); }
.lg .slate { background: #9ab4bd; } .lg .grey { background: #d9d9d9; } .lg .green { background: #459a00; } .lg .red { background: #f00; }
.selected { height: 19px; margin-top: 3px; background: var(--gold); border: 1px solid #000; padding-left: 2px; font-size: 12px; line-height: 17px; }
.canvas { flex: 1; min-width: 0; overflow: hidden; }
.dim { font: 12px var(--mono); fill: #d81818; }
.tiny { font-size: 8px; font-weight: bold; }
.micro { font-size: 7px; font-weight: bold; }
.tools { width: 163px; display: flex; flex-direction: column; }
.tgroup { display: grid; grid-template-columns: repeat(4, 38px); gap: 2px; padding: 3px 0; background: #000; border-left: 2px solid #356c60; border-right: 2px solid #8fe0d0; }
.tgroup.gray { border-color: #777; }
.tgroup button { height: 38px; border: 3px solid; display: grid; place-items: center; background: var(--cyan); border-color: var(--hi) var(--lo) var(--lo) var(--hi); }
.tgroup.gray button { background: #cfcfcf; border-color: #f4f4f4 #808080 #808080 #f4f4f4; }
.tgroup.gray .pale { background: #fff; }
.tgroup.gray .gold { background: var(--gold); border-color: #ffe9b0 #8c6a1c #8c6a1c #ffe9b0; }
.tgroup .hot { outline: 2px solid #e01414; outline-offset: -4px; }
.tgroup svg { width: 30px; height: 30px; border: 1px solid #000; }
.tools svg, .cmd svg, .pbtns svg, .plus svg, .ico svg { fill: none; stroke: #000; }
.tempty { flex: 1; border: 2px solid #2d6b5d; border-right-color: #8fe0d0; }
.cmd { height: 35px; display: flex; align-items: stretch; background: #000; border: solid #000; border-width: 1px 0 1px 1px; gap: 1px; font: bold 12px/33px var(--mono); }
.cmd > * { background: var(--cream); }
.ic { width: 30px; border: 3px solid; border-color: #fff #c8c8a0 #c8c8a0 #fff; display: grid; place-items: center; }
.cmd .g { background: var(--cream); border-color: var(--green); box-shadow: inset 0 0 0 2px #c8c8a0; }
.cmd label { width: 48px; padding-left: 3px; }
.xyw { width: 173px; padding: 2px; display: flex; }
.xyw .field { border-color: #a0a080 #c8c8a8 #c8c8a8 #a0a080; }
.cmd output { flex: 1; padding-left: 3px; }
.statusline { height: 28px; margin-top: 2px; border: 1px solid #000; background: var(--pale); box-shadow: inset 0 3px 0 #d4ffff, inset 0 -3px 0 #5c9c9c; }

/* glass window frames */
.win { position: absolute; display: flex; flex-direction: column; padding: 0 6px 7px; border: 1px solid #b8bcc0; border-radius: 7px; backdrop-filter: blur(4px); }
.wtitle { height: 27px; display: flex; align-items: center; gap: 6px; font: 12px/20px "Open Sans", sans-serif; }
.wtitle > svg, .wtitle > span { margin-bottom: 1px; }
.popview { left: 907px; top: 76px; width: 411px; height: 312px; background: #70809050; }
.popview .wtitle { background: radial-gradient(ellipse 76px 15px at 50px 14px, #a8a8a8, #80808000); }
.pclose { margin: 0 0 9px auto; width: 47px; height: 19px; border: 1px solid #d8e4ea; border-top: 0; border-radius: 0 0 5px 5px; display: grid; place-items: center; }
.pbody { flex: 1; display: flex; flex-direction: column; background: var(--green); border: 1px solid #c8d8d8; }
.prow { flex: 1; display: flex; background: #000; min-height: 0; }
.pcanvas { flex: 1; overflow: hidden; border: 3px solid; border-color: #2c6c5c #b8f4e8 #b8f4e8 #2c6c5c; }
.pbtns { width: 37px; display: flex; flex-direction: column; gap: 2px; padding: 2px 0 0 2px; }
.pbtns button { height: 33px; width: 34px; border: 1px solid var(--green); display: grid; place-items: center; background: var(--cyan); box-shadow: inset 3px 3px 0 var(--hi), inset -3px -3px 0 var(--lo); }
.pbtns svg { width: 21px; height: 21px; border: 1px solid #000; }
.pok { height: 26px; margin: 2px 3px 2px 1px; font: bold 15px/18px var(--mono); }
.drill { left: 800px; top: 548px; width: 731px; height: 435px; background: linear-gradient(#a0a0a080, #a8bcd020); box-shadow: 3px 3px 9px 2px #0009; padding: 0 5px 6px; }
.drill .wtitle { background: radial-gradient(ellipse 150px 26px at 40px 14px, #b0b0b0, #80808000), linear-gradient(90deg, #404040 0, #0a0e12 22%, #0a0e12 78%, #a9c8ea 86%, #c4dcf8); margin: 0 -5px; padding: 0 5px; border-radius: 6px 6px 0 0; }
.wctl { display: flex; margin: 0 0 8px auto; border: 1px solid #5d6b7c; border-top: 0; border-radius: 0 0 5px 5px; overflow: hidden; }
.wctl button { width: 28px; height: 18px; display: grid; place-items: center; background: linear-gradient(#e6edf6, #b9c8da); border-right: 1px solid #5d6b7c; }
.wctl .x { width: 46px; border: 0; background: linear-gradient(#e8a090, #c8402c 50%, #c03020); }
.dbody { flex: 1; display: flex; flex-direction: column; background: var(--green); border: 1px solid #000; font: bold 15px/17px var(--mono); min-height: 0; white-space: nowrap; }
.drow { display: flex; }
.fill { flex: 1; }
.cell { background: var(--cyan); display: flex; align-items: center; border: 1px solid #000; padding: 2px; }
.cell.g { background: var(--green); }
.rightpad { width: 104px; }
.r1 { height: 34px; } .r2 { height: 28px; }
.c-layer { width: 167px; }
.c-layer .bev { flex: 1; height: 27px; display: flex; justify-content: space-between; padding: 2px 13px 0 0; }
.c-drl { width: 110px; } .c-drl .field { height: 28px; }
.c-slots { width: 188px; padding-left: 9px; justify-content: space-between; }
.c-slots .opt { width: 115px; } .c-slots select { height: 27px; padding-left: 30px; }
.c-bt { width: 307px; gap: 3px; padding-left: 1px; }
.c-bt .field { width: 104px; height: 24px; margin-left: 10px; padding-bottom: 3px; }
.c-up { width: 176px; } .c-up .bev { flex: 1; height: 24px; line-height: 17px; text-align: left; }
.c-hasl { width: 128px; border: 3px solid #000; background: var(--cyan); display: flex; }
.c-hasl .field { padding: 0 5px; line-height: 16px; }
.pane { height: 212px; margin: 1px 3px 4px 3px; overflow: hidden; border: 2px solid; border-color: #2c6c5c #a8efdc #a8efdc #2c6c5c; }
table { table-layout: fixed; width: 747px; border-collapse: separate; border-spacing: 0; }
.k0 { width: 26px; } .k1 { width: 68px; } .k2 { width: 60px; } .k3 { width: 83px; } .k4 { width: 115px; } .k5 { width: 74px; }
th { height: 36px; padding: 0; background: var(--pale); border-right: 2px solid #000; border-bottom: 1px solid #000; font-weight: bold; line-height: 15px; }
tbody::before { content: ""; display: block; height: 2px; }
td { height: 33px; padding: 1px 2px; border-right: 2px solid #000; border-bottom: 2px solid #000; }
tbody tr:first-child td { border-top: 2px solid #000; height: 34px; }
td:first-child { border-left: 1px solid #000; padding: 1px; }
td .field { display: block; height: 28px; padding-left: 4px; border-color: #9c9c88 #d8d8c8 #d8d8c8 #9c9c88; }
td .beam { background-position: 2px 1px; }
td.c { background-color: var(--cream); } td.w { background: #fff; }
td .opt { padding: 0 1px 0 3px; }
.cream { background: var(--cream); height: 28px; border-color: #e4e4c0 #a8a880 #a8a880 #e4e4c0; }
td .opt select { padding-left: 3px; }
td .opt::after { border-color: #e4e4c0 #a8a880 #a8a880 #e4e4c0; }
.num { text-align: right; }
.plus { display: block; }
.tool { display: block; width: 100%; height: 27px; text-align: left; border-color: #a8efdc #2c7464 #2c7464 #a8efdc; }
.tool.gold { background: var(--gold); } .tool.green { background: var(--green); }
.dscroll { height: 15px; margin: 0 1px 6px; border: 1px solid #2c6c5c; border-bottom-color: #a8efdc; display: flex; background: #45a890; }
.dtrack { flex: 1; padding-right: 98px; display: flex; }
.dthumb { flex: 1; background: var(--green); border: 2px solid; border-color: #a8efdc #2c6c5c #2c6c5c #a8efdc; }
.ra { height: 34px; align-items: stretch; border: solid #000; border-width: 1px 0; gap: 1px; }
.t01 { width: 40px; background: var(--gold); border-right: 1px solid #000; font-size: 12px; line-height: 32px; padding-left: 3px; margin-right: 2px; }
.ra .bev, .rb > .bev, .rc .bev { outline: 1px solid #000; outline-offset: 0; }
.ra > .bev { margin: 1px; }
.first { width: 56px; } .step { width: 33px; } .last { width: 46px; } .ico { width: 27px; display: grid; place-items: center; }
.ra label { line-height: 32px; margin: 0 3px 0 1px; }
.idx { width: 60px; margin: 1px 1px 1px 0; }
.ra .opt, .ra .opt select { flex: 1; align-self: stretch; }
.ra .opt .bev { outline: 0; }
.c-unit { width: 87px; } .c-reg { width: 114px; }
.c-unit select, .c-reg select { padding-left: 3px; }
.cell .opt::after { right: 8px; }
.rb { height: 34px; margin-top: 4px; border-top: 1px solid #000; gap: 1px; }
.combine { width: 128px; margin: 1px; }
.c-merge { width: 359px; padding-left: 10px; justify-content: space-between; }
.c-merge .opt { width: 213px; height: 28px; } .c-merge select { padding-left: 3px; }
.merge { width: 56px; margin: 1px; }
.rc { flex: 1; gap: 3px; padding: 2px; background: #000; }
.rc .bev { flex: 1; outline: 0; }

.callout { position: absolute; left: 1297px; top: 413px; }
```
